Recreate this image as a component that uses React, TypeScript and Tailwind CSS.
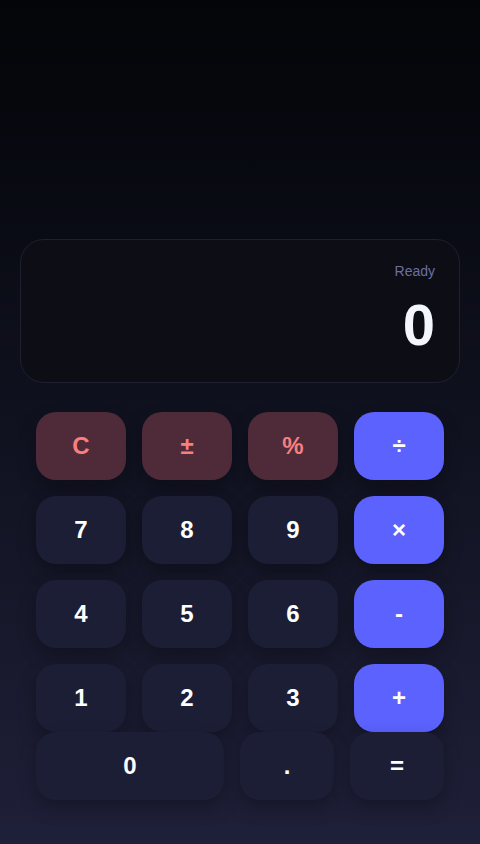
import { useState } from 'react';

type Kind = 'fn' | 'op' | 'num';

const kindStyles: Record<Kind, string> = {
  fn: 'bg-[#4f2b3a] text-[#f7807f]',
  op: 'bg-[#5b62fd] text-white',
  num: 'bg-[#1c1e35] text-white',
};

const rows: { label: string; kind: Kind }[][] = [
  [
    { label: 'C', kind: 'fn' },
    { label: '±', kind: 'fn' },
    { label: '%', kind: 'fn' },
    { label: '÷', kind: 'op' },
  ],
  [
    { label: '7', kind: 'num' },
    { label: '8', kind: 'num' },
    { label: '9', kind: 'num' },
    { label: '×', kind: 'op' },
  ],
  [
    { label: '4', kind: 'num' },
    { label: '5', kind: 'num' },
    { label: '6', kind: 'num' },
    { label: '-', kind: 'op' },
  ],
  [
    { label: '1', kind: 'num' },
    { label: '2', kind: 'num' },
    { label: '3', kind: 'num' },
    { label: '+', kind: 'op' },
  ],
];

const Key = ({
  label,
  kind,
  className = '',
  onPress,
}: {
  label: string;
  kind: Kind;
  className?: string;
  onPress: (v: string) => void;
}) => (
  <button
    onClick={() => onPress(label)}
    className={`h-[68px] rounded-[20px] text-[24px] font-bold shadow-[0_8px_18px_rgba(0,0,0,0.28)] ${kindStyles[kind]} ${className}`}
  >
    {label}
  </button>
);

export default function App() {
  const [display, setDisplay] = useState('0');
  const [status, setStatus] = useState('Ready');

  const press = (v: string) => {
    if (v === 'C') {
      setDisplay('0');
      setStatus('Ready');
      return;
    }
    if (/[0-9]/.test(v)) {
      setDisplay((d) => (d === '0' ? v : d + v));
      setStatus('Typing');
    }
  };

  return (
    <div
      className="min-h-screen flex flex-col justify-end bg-gradient-to-b from-[#040508] to-[#1f2039] px-5 pb-[44px]"
      style={{ fontFamily: '"Liberation Sans", Arial, sans-serif' }}
    >
      <div className="h-[144px] rounded-[24px] border border-[#1e2030] bg-[#0c0d15] px-6 pt-[21px] flex flex-col items-end">
        <span className="text-sm text-[#6b6f9e]">{status}</span>
        <span className="mt-[15px] text-[58px] font-bold leading-none text-[#f4f6fd]">{display}</span>
      </div>

      <div className="mt-[29px] px-4">
        <div className="flex flex-col gap-4">
          {rows.map((row, i) => (
            <div key={i} className="grid grid-cols-4 gap-4">
              {row.map((k) => (
                <Key key={k.label} label={k.label} kind={k.kind} onPress={press} />
              ))}
            </div>
          ))}
        </div>
        <div className="flex gap-4">
          <Key label="0" kind="num" className="flex-[2]" onPress={press} />
          <Key label="." kind="num" className="flex-1" onPress={press} />
          <Key label="=" kind="num" className="flex-1" onPress={press} />
        </div>
      </div>
    </div>
  );
}
